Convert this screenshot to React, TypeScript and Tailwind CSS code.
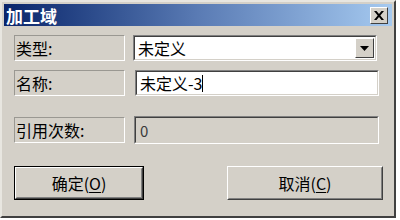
const FONT = { fontFamily: '"Noto Sans CJK SC", "DejaVu Sans", sans-serif' };

function Label({ text }: { text: string }) {
  return (
    <div className="flex h-[26px] w-[111px] items-center border border-t-[#9a9892] border-l-[#9a9892] border-b-white border-r-white pl-[1px] text-[16px] leading-none text-black">
      {text}
    </div>
  );
}

function Sunken({ children, className }: { children: React.ReactNode; className: string }) {
  return (
    <div className={"border border-t-[#808080] border-l-[#808080] border-b-white border-r-white " + className}>
      <div className="flex h-full w-full items-center border border-t-[#404040] border-l-[#404040] border-b-[#d4d0c8] border-r-[#d4d0c8]">
        {children}
      </div>
    </div>
  );
}

function Button({ label, hot, isDefault, className }: { label: string; hot: string; isDefault?: boolean; className: string }) {
  const inner = (
    <div className="flex h-full w-full items-center justify-center border border-t-white border-l-white border-b-[#404040] border-r-[#404040]">
      <div className="flex h-full w-full items-center justify-center border border-t-[#d4d0c8] border-l-[#d4d0c8] border-b-[#808080] border-r-[#808080] text-[16px] text-black">
        {label}(<span className="underline underline-offset-2">{hot}</span>)
      </div>
    </div>
  );
  return isDefault ? (
    <div className={"border border-black " + className}>{inner}</div>
  ) : (
    <div className={className}>{inner}</div>
  );
}

export default function App() {
  return (
    <div style={FONT} className="h-[220px] w-[400px] overflow-hidden bg-white">
      <div className="flex h-[218px] w-[396px] flex-col border-2 border-t-[#e8e6e0] border-l-[#e8e6e0] border-b-[#404040] border-r-[#404040] bg-[#d4d0c8] p-[2px]">
        <div className="flex h-[22px] items-center justify-between bg-gradient-to-r from-[#0a246a] via-[#5a7bb4] to-[#a6caf0] pl-[2px] pr-[4px]">
          <span className="text-[17px] font-bold leading-none text-white">加工域</span>
          <div className="flex h-[17px] w-[18px] items-center justify-center border border-t-white border-l-white border-b-[#404040] border-r-[#404040] bg-[#d4d0c8]">
            <svg width="10" height="9" viewBox="0 0 10 9">
              <path d="M0 0h2.5l2.5 3 2.5-3H10L6.3 4.5 10 9H7.5L5 6 2.5 9H0l3.7-4.5z" fill="#000" />
            </svg>
          </div>
        </div>

        <div className="flex flex-col pl-[10px] pt-[9px]">
          <div className="flex items-center gap-[8px]">
            <Label text="类型:" />
            <Sunken className="h-[26px] w-[244px] bg-white">
              <span className="flex-1 pl-[3px] text-[16px] leading-none">未定义</span>
              <div className="mr-[1px] flex h-[20px] w-[19px] items-center justify-center border border-t-white border-l-white border-b-[#404040] border-r-[#404040] bg-[#d4d0c8]">
                <svg width="9" height="5" viewBox="0 0 9 5">
                  <path d="M0 0h9L4.5 5z" fill="#000" />
                </svg>
              </div>
            </Sunken>
          </div>

          <div className="mt-[9px] flex items-center gap-[10px]">
            <Label text="名称:" />
            <Sunken className="h-[26px] w-[244px] bg-white">
              <span className="pl-[3px] text-[16px] leading-none">未定义-3</span>
              <span className="h-[17px] w-px bg-black" />
            </Sunken>
          </div>

          <div className="mt-[20px] flex items-center gap-[9px]">
            <Label text="引用次数:" />
            <Sunken className="h-[28px] w-[245px] bg-[#d4d0c8]">
              <span className="pl-[4px] text-[15px] leading-none text-[#3a3a3a]">0</span>
            </Sunken>
          </div>

          <div className="mt-[22px] flex items-center justify-between pr-[9px]">
            <Button label="确定" hot="O" isDefault className="h-[34px] w-[130px]" />
            <Button label="取消" hot="C" className="h-[34px] w-[156px]" />
          </div>
        </div>
      </div>
    </div>
  );
}
